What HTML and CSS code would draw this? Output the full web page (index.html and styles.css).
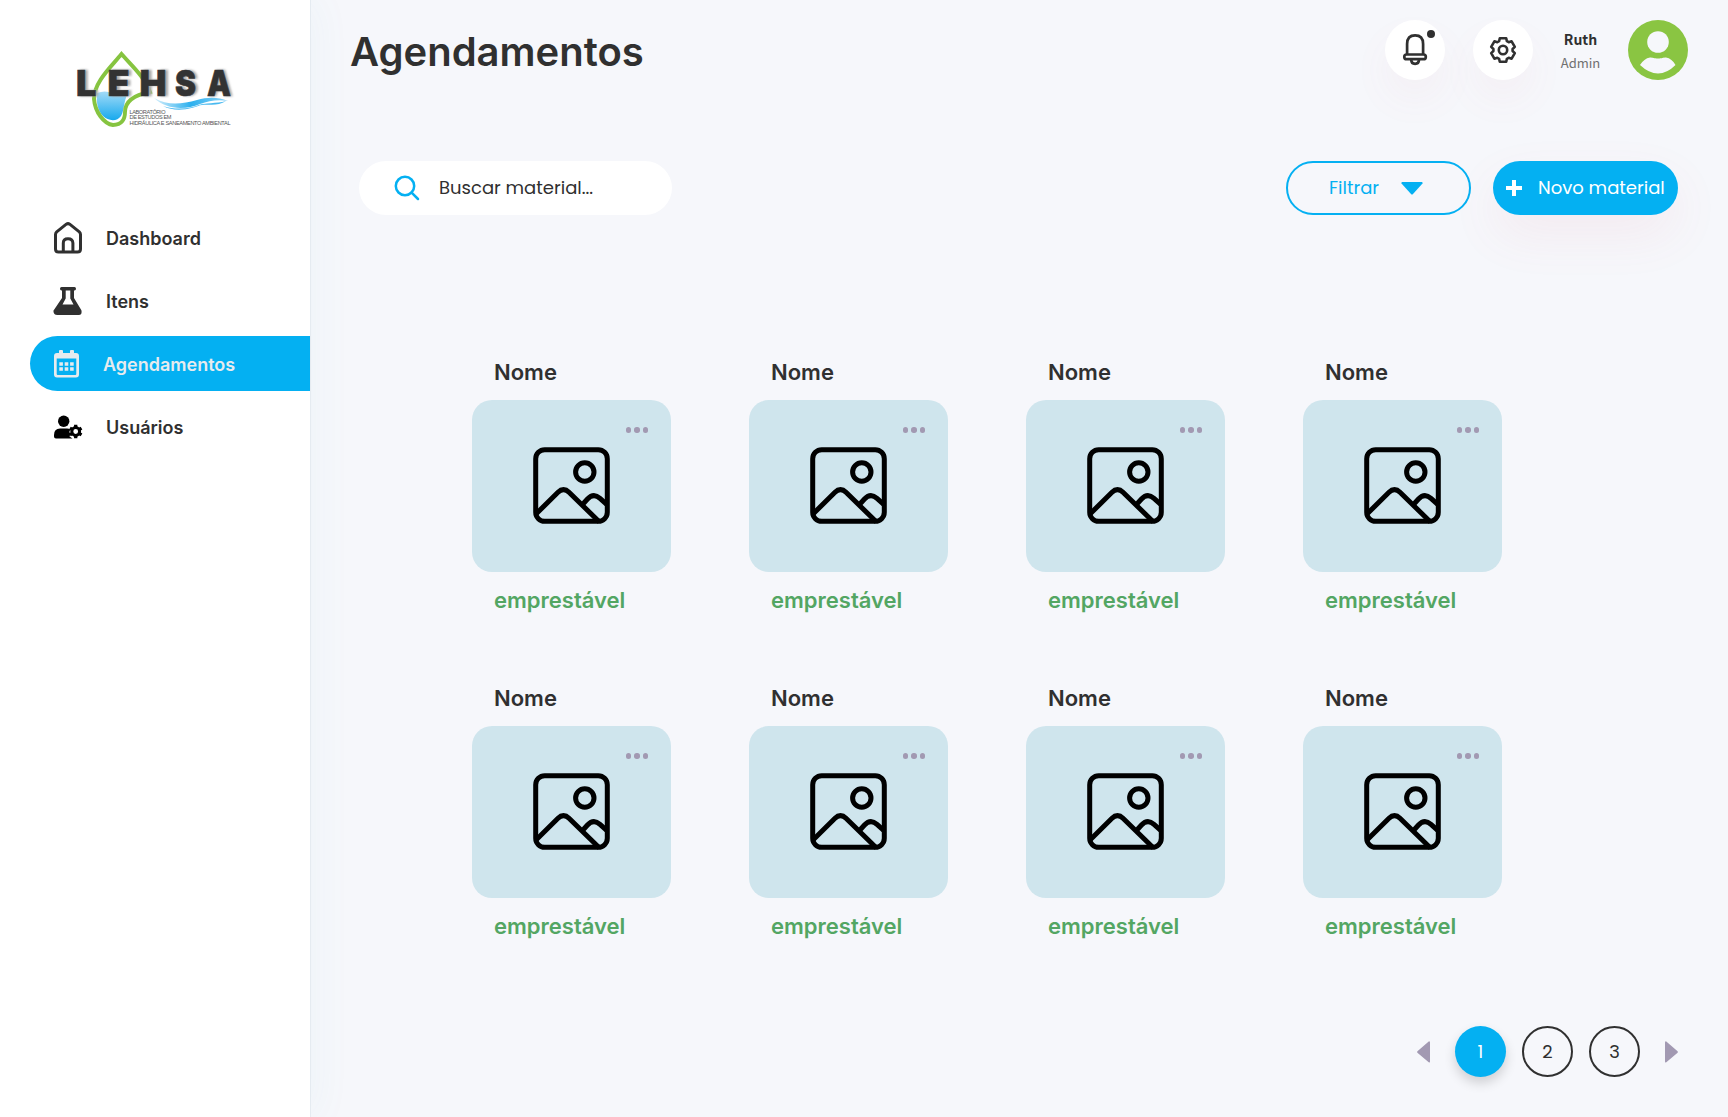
FILE: index.html
```html
<!DOCTYPE html>
<html lang="pt-BR">
<head>
<meta charset="utf-8">
<title>LEHSA - Agendamentos</title>
<link rel="stylesheet" href="styles.css">
</head>
<body>
<svg class="defs" aria-hidden="true">
  <symbol id="picture" viewBox="0 0 77 77">
    <g fill="none" stroke="#000" stroke-width="5">
      <rect x="2.7" y="2.7" width="71.6" height="71.6" rx="9"/>
      <circle cx="51.8" cy="25" r="9.2"/>
      <path d="M3 67 25 45.300Q30.500 39.800 36 45.300L66.500 75M49.500 57.500 54.500 52Q60.500 45.500 67 51.300L74 57.700"/>
    </g>
  </symbol>
</svg>
<div class="app">
  <aside class="sidebar">
    <svg class="logo" viewBox="0 0 190 100" role="img" aria-label="LEHSA">
      <defs>
        <linearGradient id="water" x1="0" y1="0" x2="0" y2="1"><stop offset="0" stop-color="#a5dcf8"/><stop offset="1" stop-color="#17a9ed"/></linearGradient>
        <linearGradient id="wave" x1="0" x2="1"><stop offset="0" stop-color="#d5effc"/><stop offset=".5" stop-color="#2cb0ee"/><stop offset="1" stop-color="#8fd4f7"/></linearGradient>
        <filter id="soft" x="-10%" y="-10%" width="130%" height="130%"><feGaussianBlur stdDeviation=".8"/></filter>
      </defs>
      <path d="M37 53Q45 50 52 53 60 56 70 51C63 58 65 70 61 76 57 82 48 81 43 76 38 71 36 63 37 53Z" fill="url(#water)"/>
      <path d="M61.500 14C51 27 34 42 34 59 35 72 44 84 53 85 62 85 65 79 65 72 65 61 74 55 90 52 85 37 70 24 61.500 14Z" fill="none" stroke="#86c440" stroke-width="3.900"/>
      <path d="M94 58C108 66 122 64 137 60 148 57 158 57 168 61 157 59 149 61 140 64 125 70 107 70 94 58Z" fill="url(#wave)"/>
      <path d="M103 66C118 71 133 68 145 63 133 69 116 73 103 66ZM136 66C146 62 156 64 166 61 157 67 147 63 136 66Z" fill="#49b9f0"/>
      <g class="logo-shadow" filter="url(#soft)"><text x="18.500" y="55.500">L</text><text x="50.500" y="55.500">E</text><text x="82.500" y="55.500">H</text><text x="117.500" y="55.500" textLength="21" lengthAdjust="spacingAndGlyphs">S</text><text x="149" y="55.500" textLength="24" lengthAdjust="spacingAndGlyphs">A</text></g>
      <g class="logo-name"><text x="16" y="55.500">L</text><text x="47.500" y="55.500">E</text><text x="79.500" y="55.500">H</text><text x="115" y="55.500" textLength="21" lengthAdjust="spacingAndGlyphs">S</text><text x="147" y="55.500" textLength="24" lengthAdjust="spacingAndGlyphs">A</text></g>
      <g class="logo-caption"><text x="69.500" y="73.500" textLength="36">LABORATÓRIO</text><text x="69.500" y="79" textLength="42">DE ESTUDOS EM</text><text x="69.500" y="84.700" textLength="101">HIDRÁULICA E SANEAMENTO AMBIENTAL</text></g>
    </svg>
    <nav class="nav">
      <a class="nav-item">
        <svg class="nav-icon" viewBox="0 0 28 32"><g fill="none" stroke="#303030" stroke-width="3" stroke-linejoin="round"><path d="M1.500 12.500Q1.500 11 2.700 9.900L12.300 2.200Q14 1 15.700 2.200L25.300 9.900Q26.500 11 26.500 12.500V27Q26.500 30 23.500 30H4.500Q1.500 30 1.500 27Z"/><path d="M9.300 30V21Q9.300 16.700 14 16.700T18.900 21V30"/></g></svg>
        <span>Dashboard</span>
      </a>
      <a class="nav-item">
        <svg class="nav-icon" viewBox="0 0 28 32"><path fill="#303030" fill-rule="evenodd" d="M7.500 2H20.500Q22 2 22 3.800T20.500 5.600H20V13L27.400 25.200Q28.600 30 24.600 30H3.400Q-.600 30-.600 25.800L8 13V5.600H7.500Q6 5.600 6 3.800T7.500 2ZM11.700 5.600V13.500L8.500 19.400H19.500L16.300 13.500V5.600Z"/></svg>
        <span>Itens</span>
      </a>
      <a class="nav-item active">
        <svg class="nav-icon" viewBox="0 0 25 32"><path fill="#e7ebee" fill-rule="evenodd" d="M6 2H8Q9 2 9 3V5H16V3Q16 2 17 2H19Q20 2 20 3V5H22Q25 5 25 8V26.500Q25 29.500 22 29.500H3Q0 29.500 0 26.500V8Q0 5 3 5H5V3Q5 2 6 2ZM2.700 10.500V26Q2.700 27 3.700 27H21.300Q22.300 27 22.300 26V10.500Z"/><path stroke="#e7ebee" stroke-width="3.600" stroke-dasharray="3.600 1.800" d="M5.300 16H19.700M5.300 21H19.700"/></svg>
        <span>Agendamentos</span>
      </a>
      <a class="nav-item">
        <svg class="nav-icon" viewBox="0 0 28 32"><circle cx="9.700" cy="10.200" r="5.700"/><path d="M6 17.500H13Q15 17.500 16.300 18.500L15.300 21 16.500 23 15.500 25.500 18.500 27.400H2Q0 27.400 0 25.400V24Q0 17.500 6 17.500Z"/><circle cx="21.700" cy="20.500" r="3.900" fill="none" stroke="#000" stroke-width="3"/><path fill="none" stroke="#000" stroke-width="3.300" d="M21.700 13.800V16.400M21.700 24.600V27.200M15.900 17.150 18.200 18.500M25.200 22.500 27.500 23.850M15.900 23.850 18.200 22.500M25.200 18.500 27.500 17.150"/></svg>
        <span>Usuários</span>
      </a>
    </nav>
  </aside>
  <main class="main">
    <header class="header">
      <h1>Agendamentos</h1>
      <div class="account">
        <button class="round"><svg width="60" height="60" viewBox="0 0 60 60"><g fill="none" stroke="#303030" stroke-width="2.700" stroke-linejoin="round"><path d="M22.100 34V24Q22.100 15.400 30.100 15.400T38.100 24V34"/><rect x="19.300" y="34.500" width="21.500" height="4.700" rx="2.300"/><path d="M26.300 39.500V40.300Q26.300 43.800 30.100 43.800T33.900 40.300V39.500"/></g><circle cx="46" cy="14" r="4" fill="#303030"/></svg></button>
        <button class="round"><svg width="60" height="60" viewBox="0 0 60 60"><g fill="none" stroke="#303030" stroke-width="2.600" stroke-linejoin="round"><path d="M26.800 18.200H33.200L33.900 21.200 35.700 22.200 38.600 21.300 41.800 26.900 39.600 29V31L41.800 33.100 38.600 38.700 35.700 37.800 33.900 38.800 33.200 41.800H26.800L26.100 38.800 24.300 37.800 21.400 38.700 18.200 33.100 20.400 31V29L18.200 26.900 21.400 21.300 24.300 22.200 26.100 21.200Z"/><circle cx="30" cy="30" r="4.200"/></g></svg></button>
        <div class="user"><strong>Ruth</strong><span>Admin</span></div>
        <svg class="avatar" viewBox="0 0 60 60"><circle cx="30" cy="30" r="30" fill="#8ac542"/><circle cx="30" cy="22" r="10.800" fill="#f6f7fb"/><path fill="#f6f7fb" d="M12 45Q16 38.500 22 37.500C25 37.500 26 38.500 30 38.500S35 37.500 38 37.500Q44 38.500 47.500 45 39 53.500 30 53.500T12 45Z"/></svg>
      </div>
    </header>
    <div class="toolbar">
      <label class="search"><svg width="26" height="26" viewBox="0 0 26 26" fill="none" stroke="#04b0f2" stroke-width="2.500" stroke-linecap="round"><circle cx="11" cy="11" r="9.200"/><path d="M17.600 17.600 24 24"/></svg><span>Buscar material...</span></label>
      <div class="actions">
        <button class="pill filter"><span>Filtrar</span><svg width="22" height="13" viewBox="0 0 22 13"><path fill="#04b0f2" d="M1 0H21Q22 .500 21.500 1.500L12 12Q11 13 10 12L.500 1.500Q0 .500 1 0Z"/></svg></button>
        <button class="pill create"><svg width="16" height="16" viewBox="0 0 16 16"><path fill="none" stroke="#fff" stroke-width="4" d="M8 0V16M0 8H16"/></svg><span>Novo material</span></button>
      </div>
    </div>
    <section class="grid">
      <article class="card"><h2>Nome</h2><div class="thumb"><svg class="picture"><use href="#picture"/></svg><span class="more"><i></i><i></i><i></i></span></div><p>emprestável</p></article>
      <article class="card"><h2>Nome</h2><div class="thumb"><svg class="picture"><use href="#picture"/></svg><span class="more"><i></i><i></i><i></i></span></div><p>emprestável</p></article>
      <article class="card"><h2>Nome</h2><div class="thumb"><svg class="picture"><use href="#picture"/></svg><span class="more"><i></i><i></i><i></i></span></div><p>emprestável</p></article>
      <article class="card"><h2>Nome</h2><div class="thumb"><svg class="picture"><use href="#picture"/></svg><span class="more"><i></i><i></i><i></i></span></div><p>emprestável</p></article>
      <article class="card"><h2>Nome</h2><div class="thumb"><svg class="picture"><use href="#picture"/></svg><span class="more"><i></i><i></i><i></i></span></div><p>emprestável</p></article>
      <article class="card"><h2>Nome</h2><div class="thumb"><svg class="picture"><use href="#picture"/></svg><span class="more"><i></i><i></i><i></i></span></div><p>emprestável</p></article>
      <article class="card"><h2>Nome</h2><div class="thumb"><svg class="picture"><use href="#picture"/></svg><span class="more"><i></i><i></i><i></i></span></div><p>emprestável</p></article>
      <article class="card"><h2>Nome</h2><div class="thumb"><svg class="picture"><use href="#picture"/></svg><span class="more"><i></i><i></i><i></i></span></div><p>emprestável</p></article>
    </section>
    <nav class="pages">
      <svg class="arrow" viewBox="0 0 13 22"><path fill="#a299b2" d="M12 .300Q13 .300 13 1.500V20.500Q13 22 11.700 21.300L.700 12Q-.500 11 .700 10Z"/></svg>
      <div class="numbers"><a class="page current">1</a><a class="page">2</a><a class="page">3</a></div>
      <svg class="arrow" viewBox="0 0 13 22"><path fill="#a299b2" d="M1 .300Q0 .300 0 1.500V20.500Q0 22 1.300 21.300L12.300 12Q13.500 11 12.300 10Z"/></svg>
    </nav>
  </main>
</div>
</body>
</html>
```
FILE: styles.css
```css
* { box-sizing: border-box; }
body { margin: 0; background: #f6f7fb; color: #303030; font-family: Inter, "Liberation Sans", sans-serif; }
button { padding: 0; border: 0; background: none; font: inherit; }
h1, h2, p { margin: 0; }
.defs { display: none; }
.app { display: flex; width: 1728px; height: 1117px; overflow: hidden; }

.sidebar { display: flex; flex-direction: column; flex: none; width: 310px; padding-top: 40px; background: #fff; box-shadow: 1px 0 0 #e5ebf1, 4px 0 40px rgba(60, 170, 200, .05); }
.logo { width: 190px; height: 100px; margin-left: 60px; }
.logo-name, .logo-shadow { font: 900 36px Inter, sans-serif; fill: #333; stroke: #333; stroke-width: .6px; }
.logo-shadow { fill: #aaa; stroke: #aaa; }
.logo-caption { font: 5.600px "Liberation Sans", sans-serif; fill: #555; }
.nav { display: flex; flex-direction: column; gap: 8px; margin-top: 70px; padding-left: 30px; }
.nav-item { display: flex; align-items: center; gap: 24px; height: 55px; padding-left: 24px; font-size: 18px; font-weight: 600; line-height: 22px; }
.nav-item span { padding-top: 2px; }
.nav-icon { width: 28px; height: 32px; overflow: visible; }
.active { border-radius: 28px 0 0 28px; background: #04b0f2; color: #e7ebee; }
.active .nav-icon { width: 25px; }

.main { display: flex; flex-direction: column; flex: 1; padding: 20px 40px 0 40px; }
.header { display: flex; justify-content: space-between; height: 60px; }
h1 { font-size: 40px; font-weight: 600; line-height: 64px; }
.account { display: flex; }
.round { width: 60px; height: 60px; margin-right: 28px; border-radius: 50%; background: #fff; box-shadow: 0 20px 40px rgba(219, 89, 111, .05); }
.round + .round { margin-right: 0; }
.round svg { display: block; }
.user { display: flex; flex-direction: column; width: 95px; padding-top: 8px; font-family: "Noto Sans CJK JP", sans-serif; text-align: center; }
.user strong { font-size: 14px; font-weight: 700; line-height: 22px; }
.user span { margin-top: 2px; color: #707070; font-size: 13px; font-weight: 400; line-height: 22px; }
.avatar { width: 60px; height: 60px; }

.toolbar { display: flex; justify-content: space-between; margin: 81px 10px 0 9px; height: 54px; font-family: Poppins, Inter, sans-serif; font-size: 18px; }
.toolbar span { padding-bottom: 1px; }
.search { display: flex; align-items: center; gap: 19px; width: 313px; padding-left: 35px; border-radius: 27px; background: #fff; }
.actions { display: flex; gap: 22px; }
.pill { display: flex; align-items: center; width: 185px; height: 54px; border-radius: 27px; white-space: nowrap; }
.filter { gap: 22px; padding-left: 41px; border: 2px solid #04b0f2; color: #04b0f2; }
.create { gap: 16px; padding-left: 13px; background: #04b0f2; color: #fff; box-shadow: 0 20px 50px rgba(219, 89, 111, .08); }

.grid { display: grid; grid-template-columns: repeat(4, 199px); gap: 66px 78px; margin: 141px 0 0 122px; }
.card { height: 260px; }
.card h2, .card p { padding-left: 22px; font-size: 22px; font-weight: 600; line-height: 32px; }
.card p { margin-top: 12px; color: #53a663; }
.thumb { position: relative; display: flex; align-items: center; justify-content: center; height: 172px; margin-top: 12px; border-radius: 20px; background: #cfe5ed; }
.picture { width: 77px; height: 77px; margin-bottom: 1px; }
.more { position: absolute; top: 27px; right: 23px; display: flex; gap: 3px; }
.more i { width: 5.500px; height: 5.500px; border-radius: 50%; background: #a299b2; }

.pages { display: flex; align-items: center; justify-content: space-between; width: 261px; height: 51px; margin: 84px 10px 0 auto; }
.arrow { width: 13px; height: 22px; }
.numbers { display: flex; gap: 16px; }
.page { display: flex; align-items: center; justify-content: center; width: 51px; height: 51px; border: 2px solid #303030; border-radius: 50%; font: 400 18px Poppins, Inter, sans-serif; }
.current { border: 0; background: #04b0f2; color: #fff; box-shadow: 0 6px 12px rgba(0, 0, 0, .16); }
```
